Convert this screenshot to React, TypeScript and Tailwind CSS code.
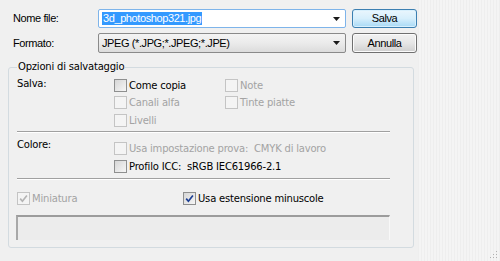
import React from "react";

type BoxProps = {
  checked?: boolean;
  disabled?: boolean;
};

function CheckBox({ checked, disabled }: BoxProps) {
  return (
    <span
      className={
        "flex h-[13px] w-[13px] shrink-0 items-center justify-center border " +
        (disabled
          ? "border-[#c4c4c4] bg-[#f4f4f4]"
          : "border-[#8e8f8f] bg-gradient-to-br from-[#d6d6d6] to-[#f6f6f6]")
      }
    >
      {checked && (
        <svg width="11" height="11" viewBox="0 0 11 11">
          <path
            d="M2.2 5.6 L4.4 8.2 L8.9 2.4"
            fill="none"
            stroke={disabled ? "#b4b4b4" : "#1c3f94"}
            strokeWidth="1.7"
          />
        </svg>
      )}
    </span>
  );
}

function Option({ label, checked, disabled }: { label: string; checked?: boolean; disabled?: boolean }) {
  return (
    <div className="flex items-center gap-[2px] whitespace-pre">
      <CheckBox checked={checked} disabled={disabled} />
      <span className={disabled ? "text-[#a3a3a3]" : "text-black"}>{label}</span>
    </div>
  );
}

function Arrow() {
  return (
    <svg width="7" height="4" viewBox="0 0 7 4" className="mr-[5px]">
      <path d="M0 0 H7 L3.5 4 Z" fill="#1a1a1a" />
    </svg>
  );
}

export default function App() {
  return (
    <div className="flex h-[261px] w-[500px] overflow-hidden bg-[#f0f0f0]">
      {/* Dialog body */}
      <div className="w-[418px] shrink-0 pt-[9px]">
        {/* File name row */}
        <div className="flex h-[19px] items-center font-['Liberation_Sans',Arial,sans-serif] text-[11px] tracking-[-0.4px] text-black">
          <span className="w-[98px] pl-[13px]">Nome file:</span>
          <div className="flex h-full w-[248px] items-center justify-between rounded-[2px] border border-[#7eb4ea] bg-white pl-[3px]">
            <span className="bg-[#3399ff] px-[1px] leading-[13px] text-white">3d_photoshop321.jpg</span>
            <Arrow />
          </div>
          <button className="ml-[6px] h-[19px] w-[65px] rounded-[3px] border border-[#3c7fb1] bg-gradient-to-b from-[#eaf6fd] via-[#d7effc] to-[#a7d9f5] shadow-[inset_0_0_0_1px_#d8f0fd]">
            Salva
          </button>
        </div>

        {/* Format row */}
        <div className="mt-[5px] flex h-[20px] items-center font-['Liberation_Sans',Arial,sans-serif] text-[11px] tracking-[-0.4px] text-black">
          <span className="w-[98px] pl-[13px]">Formato:</span>
          <div className="flex h-full w-[248px] items-center justify-between rounded-[2px] border border-[#8a8a8a] bg-gradient-to-b from-[#f4f4f4] via-[#ebebeb] to-[#dcdcdc] pl-[3px]">
            <span>JPEG (*.JPG;*.JPEG;*.JPE)</span>
            <Arrow />
          </div>
          <button className="ml-[6px] h-[20px] w-[65px] rounded-[3px] border border-[#707070] bg-gradient-to-b from-[#f2f2f2] via-[#e6e6e6] to-[#cfcfcf] shadow-[inset_0_0_0_1px_#fbfbfb]">
            Annulla
          </button>
        </div>

        {/* Save options */}
        <fieldset className="mt-[7px] ml-[8px] w-[406px] rounded-[3px] border border-[#d3dbe0] pb-[7px] font-['DejaVu_Sans',Verdana,sans-serif] text-[10px] tracking-[-0.2px]">
          <legend className="ml-[8px] px-[1px] leading-[14px] text-black">Opzioni di salvataggio</legend>

          <div className="flex pt-[3px] pl-[8px]">
            <span className="w-[97px] leading-[14px] text-black">Salva:</span>
            <div className="w-[111px]">
              <div className="flex h-[17px] items-center"><Option label="Come copia" /></div>
              <div className="flex h-[17.5px] items-center"><Option label="Canali alfa" disabled /></div>
              <div className="flex h-[17.5px] items-center"><Option label="Livelli" disabled /></div>
            </div>
            <div>
              <div className="flex h-[17px] items-center"><Option label="Note" disabled /></div>
              <div className="flex h-[17.5px] items-center"><Option label="Tinte piatte" disabled /></div>
            </div>
          </div>

          <div className="mt-[2px] ml-[8px] h-[2px] w-[373px] border-t border-[#a0a0a0] border-b border-b-white" />

          <div className="mt-[6px] flex pl-[8px]">
            <span className="w-[97px] leading-[11px] text-black">Colore:</span>
            <div>
              <div className="flex h-[18px] items-center"><Option label="Usa impostazione prova:  CMYK di lavoro" disabled /></div>
              <div className="flex h-[18px] items-center"><Option label="Profilo ICC:  sRGB IEC61966-2.1" /></div>
            </div>
          </div>

          <div className="mt-[3px] ml-[8px] h-[2px] w-[373px] border-t border-[#a0a0a0] border-b border-b-white" />

          <div className="mt-[9px] flex h-[18px] items-center pl-[8px]">
            <div className="w-[166px]"><Option label="Miniatura" checked disabled /></div>
            <Option label="Usa estensione minuscole" checked />
          </div>

          <div className="mt-[8px] ml-[7px] h-[25px] w-[374px] border-t-2 border-l-2 border-t-[#9c9c9c] border-l-[#a8a8a8] border-r border-r-[#f8f8f8] bg-[#ececec]" />
        </fieldset>
      </div>

      {/* Right pane */}
      <div className="relative flex-1 bg-[repeating-linear-gradient(90deg,#eeeeee_0px,#eeeeee_1px,#f4f4f4_1px,#f4f4f4_3px)]">
        <svg width="8" height="8" viewBox="0 0 8 8" className="absolute right-[2px] bottom-[2px]">
          <rect x="6" y="0" width="1" height="1" fill="#b0b0b0" />
          <rect x="3" y="3" width="1" height="1" fill="#b0b0b0" />
          <rect x="6" y="3" width="1" height="1" fill="#b0b0b0" />
          <rect x="0" y="6" width="1" height="1" fill="#b0b0b0" />
          <rect x="3" y="6" width="1" height="1" fill="#b0b0b0" />
          <rect x="6" y="6" width="1" height="1" fill="#b0b0b0" />
        </svg>
      </div>
    </div>
  );
}
